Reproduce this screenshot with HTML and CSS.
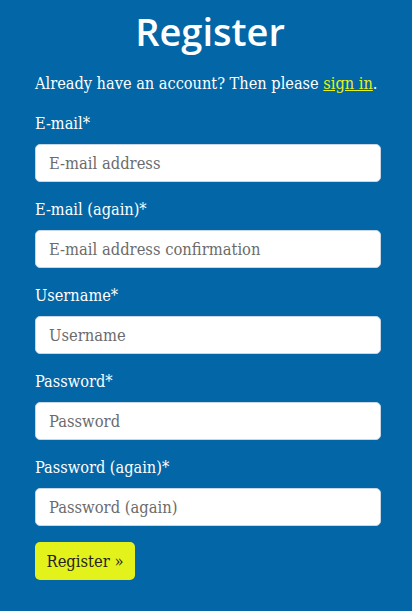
FILE: index.html
```html
<!DOCTYPE html>
<html lang="en">
<head>
<meta charset="utf-8">
<link rel="stylesheet" href="styles.css">
<title>Register</title>
</head>
<body>
<main class="page">
  <h1 class="title">Register</h1>
  <p class="intro">Already have an account? Then please <a href="#" class="link">sign in</a>.</p>
  <form class="form">
    <div class="field">
      <label class="label" for="email">E-mail*</label>
      <input class="input" id="email" type="email" placeholder="E-mail address">
    </div>
    <div class="field">
      <label class="label" for="email2">E-mail (again)*</label>
      <input class="input" id="email2" type="email" placeholder="E-mail address confirmation">
    </div>
    <div class="field">
      <label class="label" for="username">Username*</label>
      <input class="input" id="username" type="text" placeholder="Username">
    </div>
    <div class="field">
      <label class="label" for="password">Password*</label>
      <input class="input" id="password" type="password" placeholder="Password">
    </div>
    <div class="field">
      <label class="label" for="password2">Password (again)*</label>
      <input class="input" id="password2" type="password" placeholder="Password (again)">
    </div>
    <button class="btn" type="button">Register »</button>
  </form>
</main>
</body>
</html>
```
FILE: styles.css
```css
html, body {
  margin: 0;
  padding: 0;
  background: #0366a6;
}
body {
  font-family: "DejaVu Serif Condensed", "DejaVu Serif", serif;
  font-stretch: condensed;
  color: #ffffff;
  font-size: 16.2px;
}
.page {
  padding: 6px 31px 30px 35px;
  display: flex;
  flex-direction: column;
}
.title {
  margin: 0;
  text-align: center;
  font-family: "Open Sans", sans-serif;
  font-stretch: normal;
  font-weight: 600;
  font-size: 38px;
  line-height: 50px;
  padding-left: 4px;
}
.intro {
  margin: 16px 0 16px;
  line-height: 24px;
  white-space: nowrap;
}
.link {
  color: #e4f21c;
}
.form {
  display: flex;
  flex-direction: column;
}
.field {
  display: flex;
  flex-direction: column;
  gap: 8px;
  margin-bottom: 16px;
}
.label {
  line-height: 24px;
}
.input {
  box-sizing: border-box;
  height: 38px;
  width: 100%;
  border: 1px solid #c9d6e3;
  border-radius: 5px;
  background: #fff;
  padding: 0 13px;
  font-family: inherit;
  font-stretch: condensed;
  font-size: 16.4px;
  color: #333;
}
.input::placeholder {
  color: #6b6b6b;
}
.btn {
  align-self: flex-start;
  height: 38px;
  width: 100px;
  border: none;
  border-radius: 5px;
  background: #e4f21c;
  color: #222;
  font-family: inherit;
  font-stretch: condensed;
  font-size: 16.4px;
  padding: 0;
}
```
